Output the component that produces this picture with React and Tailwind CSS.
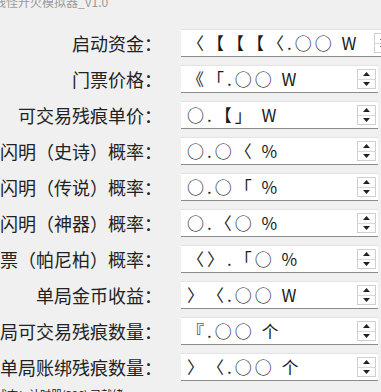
import React from "react";

const rows = [
  { label: "启动资金：", value: "〈【【【〈.○○ W", wide: true },
  { label: "门票价格：", value: "《「.○○ W" },
  { label: "可交易残痕单价：", value: "○.【」 W" },
  { label: "闪明（史诗）概率：", value: "○.○〈 %" },
  { label: "闪明（传说）概率：", value: "○.○「 %" },
  { label: "闪明（神器）概率：", value: "○.〈○ %" },
  { label: "门票（帕尼柏）概率：", value: "〈〉.「○ %" },
  { label: "单局金币收益：", value: "〉〈.○○ W" },
  { label: "单局可交易残痕数量：", value: "『.○○ 个" },
  { label: "单局账绑残痕数量：", value: "〉〈.○○ 个" },
];

function Spin() {
  return (
    <div className="flex h-[20px] w-[19px] shrink-0 flex-col border border-[#cfcfcf] bg-white">
      <div className="flex flex-1 items-center justify-center border-b border-[#d8d8d8]">
        <svg width="7" height="4" viewBox="0 0 7 4">
          <polygon points="3.5,0 7,4 0,4" fill="#222" />
        </svg>
      </div>
      <div className="flex flex-1 items-center justify-center">
        <svg width="7" height="4" viewBox="0 0 7 4">
          <polygon points="0,0 7,0 3.5,4" fill="#222" />
        </svg>
      </div>
    </div>
  );
}

export default function App() {
  return (
    <div
      className="relative h-[392px] w-[381px] overflow-hidden bg-[#f0f0f0] text-[#1a1a1a] [text-spacing-trim:space-all]"
      style={{ fontFamily: '"Noto Sans CJK SC", sans-serif' }}
    >
      <div className="-mt-[6px] ml-[-6px] h-[15px] whitespace-nowrap text-[12px] leading-[15px] text-[#9a9a9a]">
        残怪开火模拟器_V1.0
      </div>
      <div className="mt-[20px] flex flex-col gap-[8px]">
        {rows.map((r, i) => (
          <div key={i} className="flex items-center">
            <div className="flex w-[162px] shrink-0 justify-end overflow-visible whitespace-nowrap text-[18px] leading-[28px] text-[#222]">
              <span className="shrink-0">{r.label}</span>
            </div>
            <div
              className={`ml-[19px] flex h-[28px] shrink-0 items-center justify-between border-t border-b border-t-[#e4e4e4] border-b-[#8a8a8a] bg-white pr-[2px] pl-[6px] ${
                r.wide ? "w-[214px]" : "w-[197px]"
              }`}
            >
              <span
                className="whitespace-pre text-[17px] leading-[26px] tracking-[3px]"
                style={{ fontFamily: '"Noto Sans CJK SC", "Liberation Serif", serif' }}
              >
                {r.value}
              </span>
              <Spin />
            </div>
          </div>
        ))}
      </div>
      <div className="mt-[6px] ml-[-4px] whitespace-nowrap text-[11px] leading-[14px] text-[#111]">
        状态：计时器(386) 已就绪
      </div>
    </div>
  );
}
